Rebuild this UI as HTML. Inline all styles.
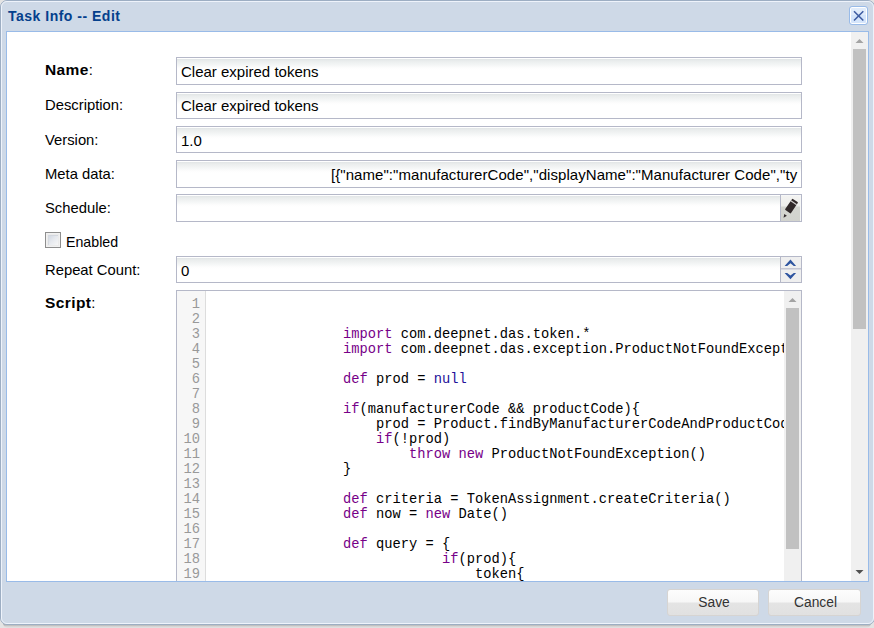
<!DOCTYPE html>
<html><head><meta charset="utf-8">
<style>
html,body{margin:0;padding:0;}
body{width:874px;height:628px;position:relative;overflow:hidden;background:#e4e4e4;font-family:"Liberation Sans",sans-serif;}
.a{position:absolute;}
#shadow{left:3px;top:620px;width:868px;height:8px;background:linear-gradient(#a8a8a8 0,#b4b4b4 5px,#cfcfcf 6px,#dcdcdc 7px,#e2e2e2 8px);border-radius:0 0 5px 5px;}
#win{left:0;top:0;width:873px;height:623px;border:1px solid #9daec3;border-radius:7px;background:#ced9e7;}
#title{left:8px;top:6px;font-weight:bold;font-size:14px;letter-spacing:0.5px;color:#04408c;line-height:20px;white-space:pre;}
#close{left:849px;top:6px;width:17px;height:17px;border:1px solid #99bbe8;border-radius:3px;background:linear-gradient(#e2edfb 0,#dfebfb 50%,#d3e4fb 50%,#d6e6fb 100%);box-shadow:inset 0 0 0 1px #fff;}
#body{left:6px;top:31px;width:861px;height:549px;border:1px solid #99bbe8;background:#fff;overflow:hidden;}
.lbl{left:45px;font-size:14.8px;color:#000;white-space:pre;line-height:18px;}
.fld{left:176px;width:624px;border:1px solid #b5b8c8;background:linear-gradient(#fff 0,#fff 1px,#e1e5e6 1px,#eaeded 3px,#f4f6f6 7px,#fdfdfd 10px,#fff 12px);}
.txt{font-size:15px;color:#000;white-space:pre;line-height:18px;}
.code{font-family:"Liberation Mono",monospace;font-size:13.75px;white-space:pre;line-height:15px;color:#000;}
.k{color:#770088;}
.at{color:#221199;}
.ln{font-family:"Liberation Mono",monospace;font-size:13.75px;line-height:15px;color:#999;text-align:right;width:30px;white-space:pre;}
.btn{width:90px;height:25px;border:1px solid #d6d4d2;border-radius:3px;background:linear-gradient(#fdfdfd 0,#f7f7f7 12px,#e4e4e4 13px,#e1e1e1 100%);text-align:center;font-size:13.8px;line-height:25.5px;color:#333;}
</style></head>
<body>
<div id="shadow" class="a"></div>
<div id="win" class="a"><div class="a" style="left:0;top:0;right:0;bottom:0;border:1px solid #eef3fb;border-radius:6px;"></div></div>
<div id="title" class="a">Task Info -- Edit</div>
<div id="close" class="a">
  <svg width="17" height="17" style="position:absolute;left:0;top:0">
    <path d="M4 4.2 L13.3 13.5 M13.3 4.2 L4 13.5" stroke="#3f5da2" stroke-width="1.6" fill="none"/>
  </svg>
</div>
<div id="body" class="a"></div>

<div id="clip" class="a" style="left:7px;top:32px;width:861px;height:549px;overflow:hidden">
<div class="a" style="left:-7px;top:-32px;width:874px;height:628px">
<!-- labels -->
<div class="a lbl" style="top:61px"><b style="font-size:15.5px;letter-spacing:0.4px">Name</b>:</div>
<div class="a lbl" style="top:96px">Description:</div>
<div class="a lbl" style="top:131px">Version:</div>
<div class="a lbl" style="top:165px">Meta data:</div>
<div class="a lbl" style="top:199px">Schedule:</div>
<div class="a lbl" style="top:233px;left:66px;font-size:14.2px">Enabled</div>
<div class="a lbl" style="top:261px">Repeat Count:</div>
<div class="a lbl" style="top:294px"><b style="font-size:15.5px;letter-spacing:0.4px">Script</b>:</div>

<!-- fields -->
<div class="a fld" style="top:57px;height:26px"></div>
<div class="a txt" style="left:181px;top:63px">Clear expired tokens</div>
<div class="a fld" style="top:92px;height:25px"></div>
<div class="a txt" style="left:181px;top:97px">Clear expired tokens</div>
<div class="a fld" style="top:126px;height:25px"></div>
<div class="a txt" style="left:181px;top:131.5px">1.0</div>
<div class="a fld" style="top:160px;height:26px;overflow:hidden">
  <div class="a txt" style="left:154px;top:4.5px;letter-spacing:0.06px">[{"name":"manufacturerCode","displayName":"Manufacturer Code","ty</div>
</div>
<div class="a fld" style="top:194px;height:26px"></div>
<div class="a fld" style="top:256px;height:25px"></div>
<div class="a txt" style="left:181px;top:262px">0</div>

<!-- checkbox -->
<div class="a" style="left:45px;top:232px;width:14px;height:14px;border:1px solid #8e8e8e;background:#ebebeb;box-shadow:inset 0 0 0 1px #f1f1f1;">
  <div class="a" style="left:2px;top:2px;width:9px;height:9px;border-top:1px solid #d3d7de;border-left:1px solid #d6dae0;background:linear-gradient(135deg,#d3d9e3 0,#e6e9ee 45%,#f6f6f6 100%);"></div>
</div>

<!-- script editor -->
<div class="a" style="left:176px;top:290px;width:624px;height:300px;border:1px solid #b5b8c8;background:#fff;"></div>
<div class="a" style="left:177px;top:291px;width:28px;height:300px;background:#f7f7f7;border-right:1px solid #ddd;"></div>


<div class="a" style="left:206px;top:291px;width:578px;height:300px;overflow:hidden">
<div class="a code" style="left:137px;top:6px"></div>
<div class="a code" style="left:137px;top:21px"></div>
<div class="a code" style="left:137px;top:36px"><span class="k">import</span> com.deepnet.das.token.*</div>
<div class="a code" style="left:137px;top:51px"><span class="k">import</span> com.deepnet.das.exception.ProductNotFoundException</div>
<div class="a code" style="left:137px;top:66px"></div>
<div class="a code" style="left:137px;top:81px"><span class="k">def</span> prod = <span class="at">null</span></div>
<div class="a code" style="left:137px;top:96px"></div>
<div class="a code" style="left:137px;top:111px"><span class="k">if</span>(manufacturerCode &amp;&amp; productCode){</div>
<div class="a code" style="left:137px;top:126px">    prod = Product.findByManufacturerCodeAndProductCode(manufacturerCode, productCode)</div>
<div class="a code" style="left:137px;top:141px">    <span class="k">if</span>(!prod)</div>
<div class="a code" style="left:137px;top:156px">        <span class="k">throw</span> <span class="k">new</span> ProductNotFoundException()</div>
<div class="a code" style="left:137px;top:171px">}</div>
<div class="a code" style="left:137px;top:186px"></div>
<div class="a code" style="left:137px;top:201px"><span class="k">def</span> criteria = TokenAssignment.createCriteria()</div>
<div class="a code" style="left:137px;top:216px"><span class="k">def</span> now = <span class="k">new</span> Date()</div>
<div class="a code" style="left:137px;top:231px"></div>
<div class="a code" style="left:137px;top:246px"><span class="k">def</span> query = {</div>
<div class="a code" style="left:137px;top:261px">            <span class="k">if</span>(prod){</div>
<div class="a code" style="left:137px;top:276px">                token{</div>
<div class="a code" style="left:137px;top:291px">                    eq("product", prod)</div>
<div class="a code" style="left:137px;top:306px">                }</div>
</div>
<div class="a" style="left:177px;top:291px;width:28px;height:300px;overflow:hidden">
<div class="a ln" style="left:-7px;top:6px">1</div>
<div class="a ln" style="left:-7px;top:21px">2</div>
<div class="a ln" style="left:-7px;top:36px">3</div>
<div class="a ln" style="left:-7px;top:51px">4</div>
<div class="a ln" style="left:-7px;top:66px">5</div>
<div class="a ln" style="left:-7px;top:81px">6</div>
<div class="a ln" style="left:-7px;top:96px">7</div>
<div class="a ln" style="left:-7px;top:111px">8</div>
<div class="a ln" style="left:-7px;top:126px">9</div>
<div class="a ln" style="left:-7px;top:141px">10</div>
<div class="a ln" style="left:-7px;top:156px">11</div>
<div class="a ln" style="left:-7px;top:171px">12</div>
<div class="a ln" style="left:-7px;top:186px">13</div>
<div class="a ln" style="left:-7px;top:201px">14</div>
<div class="a ln" style="left:-7px;top:216px">15</div>
<div class="a ln" style="left:-7px;top:231px">16</div>
<div class="a ln" style="left:-7px;top:246px">17</div>
<div class="a ln" style="left:-7px;top:261px">18</div>
<div class="a ln" style="left:-7px;top:276px">19</div>
<div class="a ln" style="left:-7px;top:291px">20</div>
<div class="a ln" style="left:-7px;top:306px">21</div>
</div>

<!-- script scrollbar -->
<div class="a" style="left:784px;top:291px;width:17px;height:300px;background:#f0f0f0"></div>
<div class="a" style="left:786px;top:308px;width:13px;height:241px;background:#c1c1c1"></div>
<svg class="a" style="left:784px;top:291px" width="17" height="17"><path d="M4.5 11 L8.5 7 L12.5 11 Z" fill="#a3a3a3"/></svg>
<!-- script editor right border (above track) -->
<div class="a" style="left:801px;top:290px;width:1px;height:300px;background:#b5b8c8"></div>

<!-- trigger: pencil -->
<div class="a" style="left:780px;top:195px;width:20px;height:26px;border-left:1px solid #b5b8c8;border-top-right-radius:2px;background:linear-gradient(#f3f3f1 0,#eeeeec 11px,#d4d5d0 12px,#d2d3ce 100%);box-shadow:inset -1px 1px 0 #f6f7f7;"></div>
<svg class="a" style="left:780px;top:194px" width="22" height="28">
  <g transform="translate(11.5 12.1) rotate(34)">
    <rect x="-3.5" y="-6.7" width="7" height="13.4" rx="0.7" fill="#302829"/>
    <rect x="-3.5" y="-4.6" width="7" height="1.2" fill="#d2d0ce"/>
    <path d="M-1.6 10.6 L1.6 10.6 L0 14.2 Z" fill="#342c2e"/>
  </g>
</svg>

<!-- spinner -->
<div class="a" style="left:780px;top:257px;width:20px;height:25px;border-left:1px solid #b5b8c8;border-top-right-radius:2px;background:#efefef;"></div>
<div class="a" style="left:781px;top:268px;width:20px;height:1px;background:#c4c6d3"></div>
<div class="a" style="left:781px;top:269px;width:20px;height:1px;background:#d9dae2"></div>
<svg class="a" style="left:780px;top:256px" width="22" height="28">
  <path d="M10.46 3.45 L16.08 9.88 L13.78 9.88 L10.46 7.18 L7.19 9.88 L4.6 9.88 Z" fill="#2f55a0"/>
  <path d="M10.46 23.2 L16.08 17.1 L13.78 17.1 L10.46 19.6 L7.19 17.1 L4.6 17.1 Z" fill="#2f55a0"/>
</svg>

<!-- body scrollbar -->
<div class="a" style="left:851px;top:32px;width:17px;height:549px;background:#f0f0f0"></div>
<div class="a" style="left:853px;top:49px;width:13px;height:280px;background:#c1c1c1"></div>
<svg class="a" style="left:851px;top:32px" width="17" height="17"><path d="M4.5 11 L8.5 7 L12.5 11 Z" fill="#a3a3a3"/></svg>
<svg class="a" style="left:851px;top:564px" width="17" height="17"><path d="M4.5 6 L8.5 10 L12.5 6 Z" fill="#505050"/></svg>

</div></div>

<!-- buttons -->
<div class="a btn" style="left:667px;top:589px;padding-left:2px;width:88px;">Save</div>
<div class="a btn" style="left:768px;top:589px;padding-left:2px;width:89px;">Cancel</div>

</body></html>
